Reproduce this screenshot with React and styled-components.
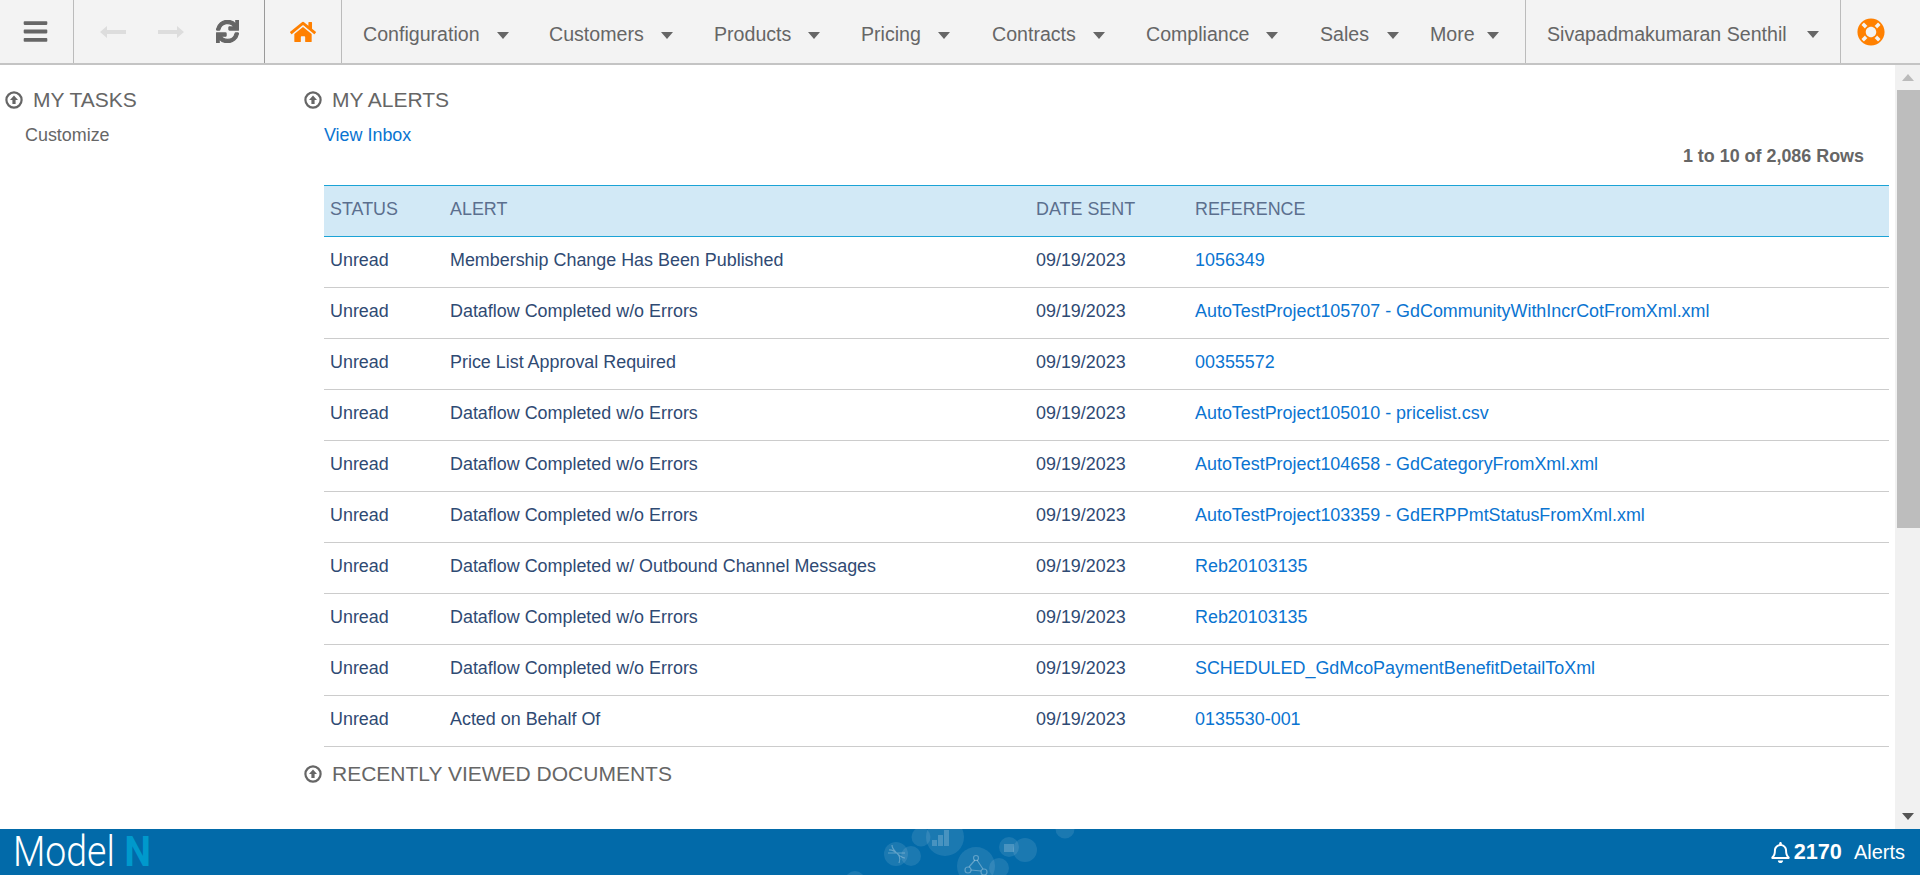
import styled, { createGlobalStyle } from 'styled-components';
import { FaBars, FaSync, FaHome, FaLifeRing, FaRegBell } from 'react-icons/fa';

const alerts = [
    ['Membership Change Has Been Published', '1056349'],
    ['Dataflow Completed w/o Errors', 'AutoTestProject105707 - GdCommunityWithIncrCotFromXml.xml'],
    ['Price List Approval Required', '00355572'],
    ['Dataflow Completed w/o Errors', 'AutoTestProject105010 - pricelist.csv'],
    ['Dataflow Completed w/o Errors', 'AutoTestProject104658 - GdCategoryFromXml.xml'],
    ['Dataflow Completed w/o Errors', 'AutoTestProject103359 - GdERPPmtStatusFromXml.xml'],
    ['Dataflow Completed w/ Outbound Channel Messages', 'Reb20103135'],
    ['Dataflow Completed w/o Errors', 'Reb20103135'],
    ['Dataflow Completed w/o Errors', 'SCHEDULED_GdMcoPaymentBenefitDetailToXml'],
    ['Acted on Behalf Of', '0135530-001'],
];

const menus = [
    ['Configuration', 186, 17],
    ['Customers', 165, 17],
    ['Products', 147, 17],
    ['Pricing', 131, 17],
    ['Contracts', 154, 17],
    ['Compliance', 174, 17],
    ['Sales', 110, 18],
    ['More', 95, 12],
];

function CollapseIcon() {
    return (
        <svg width="18" height="18" viewBox="0 0 18 18">
            <circle cx="9" cy="9" r="7.6" fill="none" stroke="#666" strokeWidth="2.2" />
            <path d="M9 4.6 L13 9 H10.6 V13 H7.4 V9 H5 Z" fill="#666" />
        </svg>
    );
}

function Caret() {
    return (
        <svg width="12" height="7" viewBox="0 0 12 7">
            <path d="M0 0 H12 L6 7 Z" fill="#666" />
        </svg>
    );
}

function HistoryArrow({ flip }) {
    return (
        <svg width="26" height="12" viewBox="0 0 26 12" style={flip ? { transform: 'scaleX(-1)' } : undefined}>
            <path d="M0 6 L7 0 V4 H26 V8 H7 V12 Z" fill="#ddd" />
        </svg>
    );
}

function FooterArt() {
    return (
        <svg width="320" height="46" viewBox="0 0 320 46">
            <g fill="#fff" fillOpacity="0.1">
                <circle cx="55" cy="52" r="10" />
                <circle cx="96" cy="25" r="12" />
                <circle cx="111" cy="27" r="10" />
                <circle cx="121" cy="8" r="9.5" />
                <circle cx="145" cy="8" r="19" />
                <circle cx="176" cy="37" r="19" />
                <circle cx="199" cy="39" r="10" />
                <circle cx="209" cy="18" r="10" />
                <circle cx="225" cy="21" r="12" />
                <circle cx="265" cy="0" r="9.5" />
            </g>
            <g fill="#fff" fillOpacity="0.2">
                <rect x="132" y="11" width="5" height="6" />
                <rect x="138" y="6" width="5" height="11" />
                <rect x="144" y="1" width="5" height="16" />
                <rect x="204" y="15" width="10" height="8" />
            </g>
            <g fill="none" stroke="#fff" strokeOpacity="0.3" strokeWidth="1.2">
                <path d="M89 21 C96 20 99 29 105 29 M92 16 C92 24 103 24 99 34 M88 24 H105" />
                <circle cx="176" cy="29" r="2.5" />
                <circle cx="168" cy="41" r="3" />
                <circle cx="184" cy="43" r="3" />
                <path d="M175 31 L169 38 M177 31 L183 40 M171 41 L181 42" />
            </g>
        </svg>
    );
}

function App() {
    return (
        <Page>
            <GlobalStyle />
            <Header>
                <HamburgerCell><FaBars /></HamburgerCell>
                <HistoryCell>
                    <HistoryArrow />
                    <HistoryArrow flip />
                    <FaSync color="#666" size={23} stroke="#666" strokeWidth={28} />
                </HistoryCell>
                <HomeCell><FaHome /></HomeCell>
                <Menus>
                    {menus.map(([name, width, gap]) => (
                        <MenuItem key={name} $width={width} $gap={gap}>{name}<Caret /></MenuItem>
                    ))}
                </Menus>
                <UserCell>Sivapadmakumaran Senthil<Caret /></UserCell>
                <HelpCell><FaLifeRing /></HelpCell>
            </Header>

            <Body>
                <Content>
                    <Sidebar>
                        <SectionTitle><CollapseIcon />MY TASKS</SectionTitle>
                        <SideLink>Customize</SideLink>
                    </Sidebar>
                    <Main>
                        <SectionTitle><CollapseIcon />MY ALERTS</SectionTitle>
                        <AlertsPanel>
                            <InboxLink>View Inbox</InboxLink>
                            <RowCount>1 to 10 of 2,086 Rows</RowCount>
                            <Table>
                                <colgroup>
                                    <col style={{ width: 120 }} />
                                    <col style={{ width: 586 }} />
                                    <col style={{ width: 159 }} />
                                    <col />
                                </colgroup>
                                <thead>
                                    <tr>
                                        <Th>STATUS</Th>
                                        <Th>ALERT</Th>
                                        <Th>DATE SENT</Th>
                                        <Th>REFERENCE</Th>
                                    </tr>
                                </thead>
                                <tbody>
                                    {alerts.map(([alert, reference], i) => (
                                        <tr key={i}>
                                            <Td>Unread</Td>
                                            <Td>{alert}</Td>
                                            <Td>09/19/2023</Td>
                                            <Td><RefLink>{reference}</RefLink></Td>
                                        </tr>
                                    ))}
                                </tbody>
                            </Table>
                        </AlertsPanel>
                        <RecentTitle><CollapseIcon />RECENTLY VIEWED DOCUMENTS</RecentTitle>
                    </Main>
                </Content>
                <Scrollbar>
                    <ScrollButton><svg width="12" height="7" viewBox="0 0 12 7"><path d="M0 7 H12 L6 0 Z" fill="#bbb" /></svg></ScrollButton>
                    <ScrollThumb />
                    <ScrollTrack />
                    <ScrollButton><svg width="12" height="7" viewBox="0 0 12 7"><path d="M0 0 H12 L6 7 Z" fill="#555" /></svg></ScrollButton>
                </Scrollbar>
            </Body>

            <Footer>
                <Logo>Model<LogoN>N</LogoN></Logo>
                <Bubbles><FooterArt /></Bubbles>
                <AlertBox>
                    <FaRegBell size={21} />
                    <AlertCount>2170</AlertCount>
                    Alerts
                </AlertBox>
            </Footer>
        </Page>
    );
}

export default App;

const GlobalStyle = createGlobalStyle`
    html, body {
        margin: 0;
        padding: 0;
        height: 100%;
        overflow: hidden;
    }
    * {
        box-sizing: border-box;
    }
`;

const Page = styled.div`
    height: 875px;
    display: flex;
    flex-direction: column;
    background: #fff;
    font-family: 'Liberation Sans', Arial, sans-serif;
    font-size: 17.92px;
    color: #666;
`;

const Header = styled.div`
    height: 65px;
    flex: none;
    display: flex;
    background: #f3f3f3;
    border-bottom: 2px solid #c4c4c4;
    color: #666;
    font-size: 19.6px;
`;

const Cell = styled.div`
    height: 63px;
    display: flex;
    align-items: center;
    border-right: 1px solid #bbb;
`;

const HamburgerCell = styled(Cell)`
    width: 74px;
    justify-content: center;
    padding-right: 3px;
    font-size: 27px;
`;

const HistoryCell = styled(Cell)`
    width: 191px;
    padding: 0 25px 0 26px;
    justify-content: space-between;
    border-right-color: #999;
`;

const HomeCell = styled(Cell)`
    width: 77px;
    justify-content: center;
    font-size: 26px;
    color: #ff8000;
`;

const Menus = styled.div`
    display: flex;
    width: 1184px;
    height: 63px;
    padding-left: 21px;
    border-right: 1px solid #bbb;
`;

const MenuItem = styled.div`
    width: ${(p) => p.$width}px;
    display: flex;
    align-items: center;
    gap: ${(p) => p.$gap}px;
    padding-top: 6px;
    flex: none;
    svg {
        margin-top: 1px;
    }
`;

const UserCell = styled(Cell)`
    width: 315px;
    padding: 6px 0 0 21px;
    gap: 20px;
`;

const HelpCell = styled.div`
    flex: 1;
    display: flex;
    align-items: center;
    padding-left: 16px;
    font-size: 28px;
    color: #ff8000;
    height: 63px;
`;

const Body = styled.div`
    flex: 1;
    min-height: 0;
    display: flex;
`;

const Content = styled.div`
    flex: 1;
    min-width: 0;
    display: flex;
    padding: 24px 0 0 5px;
`;

const Sidebar = styled.div`
    width: 299px;
    flex: none;
`;

const Main = styled.div`
    flex: 1;
    min-width: 0;
`;

const SectionTitle = styled.div`
    display: flex;
    align-items: center;
    gap: 10px;
    height: 22px;
    font-size: 21px;
    color: #666;
`;

const RecentTitle = styled(SectionTitle)`
    margin-top: 16px;
`;

const SideLink = styled.div`
    margin: 15px 0 0 20px;
    color: #666;
    line-height: 18px;
`;

const AlertsPanel = styled.div`
    padding: 15px 0 0 20px;
`;

const InboxLink = styled.div`
    color: #0a74d1;
    line-height: 18px;
`;

const RowCount = styled.div`
    margin-top: 3px;
    height: 38px;
    padding: 0 31px 0 0;
    line-height: 18px;
    text-align: right;
    font-weight: bold;
    color: #666;
`;

const Table = styled.table`
    width: 1565px;
    table-layout: fixed;
    border-collapse: collapse;
`;

const Th = styled.th`
    height: 51px;
    padding: 0 6px 3px;
    background: #d2e9f6;
    border-top: 1px solid #1ba3d6;
    border-bottom: 1px solid #1ba3d6;
    text-align: left;
    font-weight: normal;
    color: #5b6f8e;
`;

const Td = styled.td`
    height: 51px;
    padding: 0 6px 3px;
    border-bottom: 1px solid #ccc;
    color: #2f4a73;
`;

const RefLink = styled.span`
    color: #0a74d1;
`;

const Scrollbar = styled.div`
    width: 25px;
    flex: none;
    display: flex;
    flex-direction: column;
    background: #f1f1f1;
`;

const ScrollButton = styled.div`
    height: 25px;
    flex: none;
    display: flex;
    align-items: center;
    justify-content: center;
`;

const ScrollThumb = styled.div`
    height: 438px;
    flex: none;
    margin-left: 2px;
    background: #bdbdbd;
`;

const ScrollTrack = styled.div`
    flex: 1;
`;

const Footer = styled.div`
    height: 46px;
    flex: none;
    position: relative;
    display: flex;
    align-items: center;
    justify-content: space-between;
    padding: 0 15px 0 13px;
    background: #026aa9;
    color: #fff;
`;

const Logo = styled.div`
    display: flex;
    align-items: baseline;
    gap: 11px;
    font-family: Roboto, sans-serif;
    font-weight: 300;
    font-size: 42px;
    line-height: 46px;
    transform: scaleX(0.89);
    transform-origin: left center;
`;

const LogoN = styled.span`
    font-weight: 700;
    color: #0099cc;
`;

const Bubbles = styled.div`
    position: absolute;
    top: 0;
    left: 800px;
    height: 46px;
    overflow: hidden;
`;

const AlertBox = styled.div`
    position: relative;
    display: flex;
    align-items: center;
    font-size: 20px;
`;

const AlertCount = styled.span`
    margin: 0 12px 0 3px;
    font-weight: bold;
    font-size: 21.7px;
`;
